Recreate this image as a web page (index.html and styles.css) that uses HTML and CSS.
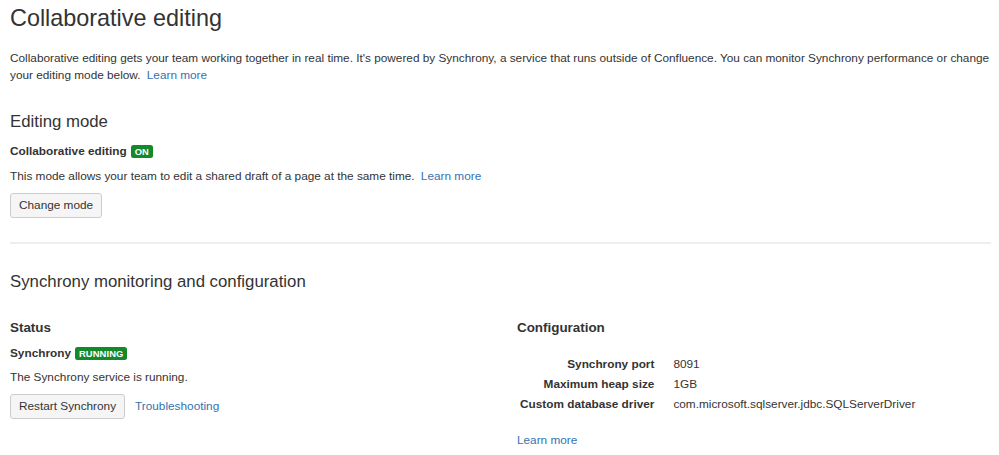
FILE: index.html
```html
<!DOCTYPE html>
<html lang="en">
<head>
<meta charset="utf-8">
<title>Collaborative editing</title>
<link rel="stylesheet" href="styles.css">
</head>
<body>
<main class="page">
  <h1 class="page-title">Collaborative editing</h1>
  <p class="intro">Collaborative editing gets your team working together in real time. It's powered by Synchrony, a service that runs outside of Confluence. You can monitor Synchrony performance or change your editing mode below. <a href="#" class="link inline-link">Learn more</a></p>

  <section class="mode">
    <h2 class="section-title">Editing mode</h2>
    <div class="status-line"><strong>Collaborative editing</strong><span class="lozenge">On</span></div>
    <p class="desc">This mode allows your team to edit a shared draft of a page at the same time. <a href="#" class="link inline-link">Learn more</a></p>
    <div class="actions"><button class="btn" type="button">Change mode</button></div>
  </section>

  <hr class="divider">

  <section class="sync">
    <h2 class="section-title sync-title">Synchrony monitoring and configuration</h2>
    <div class="columns">
      <div class="col">
        <h3 class="sub-title">Status</h3>
        <div class="status-line"><strong>Synchrony</strong><span class="lozenge">Running</span></div>
        <p class="desc desc-tight">The Synchrony service is running.</p>
        <div class="actions actions-tight"><button class="btn" type="button">Restart Synchrony</button><a href="#" class="link">Troubleshooting</a></div>
      </div>
      <div class="col">
        <h3 class="sub-title">Configuration</h3>
        <table class="config">
          <tr><th>Synchrony port</th><td>8091</td></tr>
          <tr><th>Maximum heap size</th><td>1GB</td></tr>
          <tr><th>Custom database driver</th><td>com.microsoft.sqlserver.jdbc.SQLServerDriver</td></tr>
        </table>
        <a href="#" class="link config-link">Learn more</a>
      </div>
    </div>
  </section>
</main>
</body>
</html>
```
FILE: styles.css
```css
html, body {
  margin: 0;
  padding: 0;
  background: #fff;
}
body {
  font-family: "Liberation Sans", Arial, Helvetica, sans-serif;
  font-size: 11.8px;
  line-height: 17px;
  color: #333;
}
.page {
  padding: 0 8px 0 10px;
}
.page-title {
  margin: 4px 0 0;
  font-size: 23.4px;
  line-height: 28px;
  font-weight: normal;
  color: #333;
}
.intro {
  margin: 18px 0 0;
}
.link {
  color: #3572b0;
  text-decoration: none;
}
.inline-link {
  margin-left: 3px;
}
.section-title {
  margin: 26px 0 0;
  font-size: 16.8px;
  line-height: 24px;
  font-weight: normal;
}
.status-line {
  margin-top: 9px;
  display: flex;
  align-items: center;
  gap: 4px;
}
.status-line strong {
  font-weight: bold;
}
.lozenge {
  display: inline-block;
  background: #14892c;
  color: #fff;
  font-size: 9.4px;
  font-weight: bold;
  text-transform: uppercase;
  line-height: 13px;
  padding: 0 4px;
  border-radius: 2.5px;
  letter-spacing: 0.1px;
}
.desc {
  margin: 8px 0 0;
}
.desc-tight {
  margin-top: 7px;
}
.actions {
  margin-top: 8px;
  display: flex;
  align-items: center;
  gap: 10px;
}
.actions-tight {
  margin-top: 8px;
}
.btn {
  font-family: inherit;
  font-size: 11.8px;
  color: #333;
  background: #f5f5f5;
  border: 1px solid #ccc;
  border-radius: 3px;
  height: 25px;
  padding: 0 8px;
  line-height: 23px;
  margin: 0;
}
.divider {
  border: 0;
  height: 2px;
  background: #eee;
  margin: 24px 0 0;
}
.sync-title {
  margin-top: 26px;
}
.columns {
  display: grid;
  grid-template-columns: 507px 1fr;
  margin-top: 25px;
}
.sub-title {
  margin: 0;
  font-size: 13.4px;
  line-height: 17px;
  font-weight: bold;
}
.config {
  border-collapse: collapse;
  margin-top: 18px;
}
.config th {
  text-align: right;
  font-weight: bold;
  padding: 1.5px 19px 1.5px 3px;
  line-height: 17px;
}
.config td {
  padding: 1.5px 0;
  line-height: 17px;
}
.config-link {
  display: inline-block;
  margin-top: 18px;
}
```
